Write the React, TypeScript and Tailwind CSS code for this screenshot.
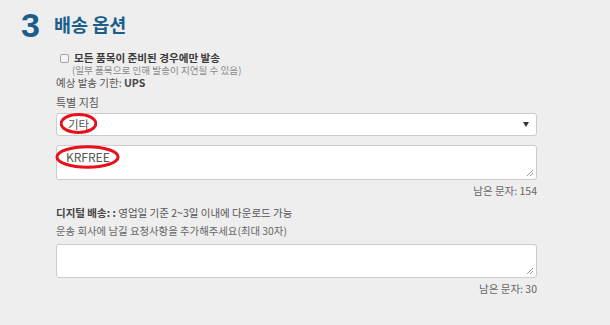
const FONT = '"Noto Sans CJK KR", "Noto Sans", sans-serif'

function Ellipse({ className }: { className: string }) {
    return (
        <svg className={`pointer-events-none absolute ${className}`} viewBox="0 0 100 40" preserveAspectRatio="none">
            <ellipse cx="50" cy="20" rx="47" ry="17" fill="none" stroke="#e8101a" vectorEffect="non-scaling-stroke" style={{ strokeWidth: 3 }} />
        </svg>
    )
}

function Resize() {
    return (
        <svg className="absolute bottom-[2px] right-[2px]" width="8" height="8" viewBox="0 0 8 8">
            <path d="M7 1L1 7M7 4L4 7" stroke="#9a9a9a" strokeWidth="1" />
        </svg>
    )
}

export default function App() {
    return (
        <div className="h-[325px] w-[610px] bg-[#eeeeee] text-[#555555]" style={{ fontFamily: FONT }}>
            <div className="flex h-[48px] items-center gap-[14px] pl-[21px] pt-[1px]">
                <span className="text-[34px] font-bold leading-none text-[#1b5e8c]" style={{ fontFamily: '"Liberation Sans", Arial, sans-serif' }}>3</span>
                <span className="text-[18.5px] font-bold leading-none text-[#1b5e8c]">배송 옵션</span>
            </div>

            <div className="w-[537px] pl-[56px]">
                <div className="mt-[3px] flex h-[14px] items-center gap-[5px] pl-[4px]">
                    <span className="h-[9px] w-[9px] shrink-0 rounded-[2px] border border-[#a5a5a5] bg-[#f5f5f5]" />
                    <span className="text-[10.6px] font-bold leading-none text-[#3a3a3a]">모든 품목이 준비된 경우에만 발송</span>
                </div>
                <div className="flex h-[12px] items-center pl-[16px] text-[9.6px] leading-none text-[#8a8a8a]">(일부 품목으로 인해 발송이 지연될 수 있음)</div>
                <div className="flex h-[12px] items-center text-[10.5px] leading-none text-[#555555]">
                    <span>예상 발송 기한:&nbsp;</span><span className="font-bold text-[#444444]">UPS</span>
                </div>
                <div className="mt-[7px] flex h-[12px] items-center text-[11px] leading-none">특별 지침</div>

                <div className="relative mt-[5px] flex h-[23px] items-center justify-between rounded-[3px] border border-[#cccccc] bg-white pl-[11px] pr-[7px] text-[11.5px]">
                    <span className="text-[#555555]">기타</span>
                    <svg width="6" height="5" viewBox="0 0 6 5"><path d="M0 0H6L3 5Z" fill="#333333" /></svg>
                    <Ellipse className="left-[3px] top-[-1px] h-[21px] w-[37px]" />
                </div>

                <div className="relative mt-[9px] h-[35px] rounded-[3px] border border-[#cccccc] bg-white pl-[9px] pt-[4px] text-[12px] leading-[14px] text-[#555555]">
                    KRFREE
                    <Resize />
                    <Ellipse className="left-[-2px] top-[-1px] h-[24px] w-[65px]" />
                </div>
                <div className="flex h-[22px] items-center justify-end text-[10.5px] leading-none text-[#666666]">남은 문자: 154</div>

                <div className="mt-[3px] flex h-[16px] items-center text-[10.5px] leading-none text-[#555555]">
                    <span className="font-bold text-[#444444]">디지털 배송: :</span><span>&nbsp;영업일 기준 2~3일 이내에 다운로드 가능</span>
                </div>
                <div className="mt-[3px] flex h-[14px] items-center text-[10.4px] leading-none text-[#666666]">운송 회사에 남길 요청사항을 추가해주세요(최대 30자)</div>

                <div className="relative mt-[6px] h-[34px] rounded-[3px] border border-[#cccccc] bg-white">
                    <Resize />
                </div>
                <div className="flex h-[22px] items-center justify-end text-[10.5px] leading-none text-[#666666]">남은 문자: 30</div>
            </div>
        </div>
    )
}
